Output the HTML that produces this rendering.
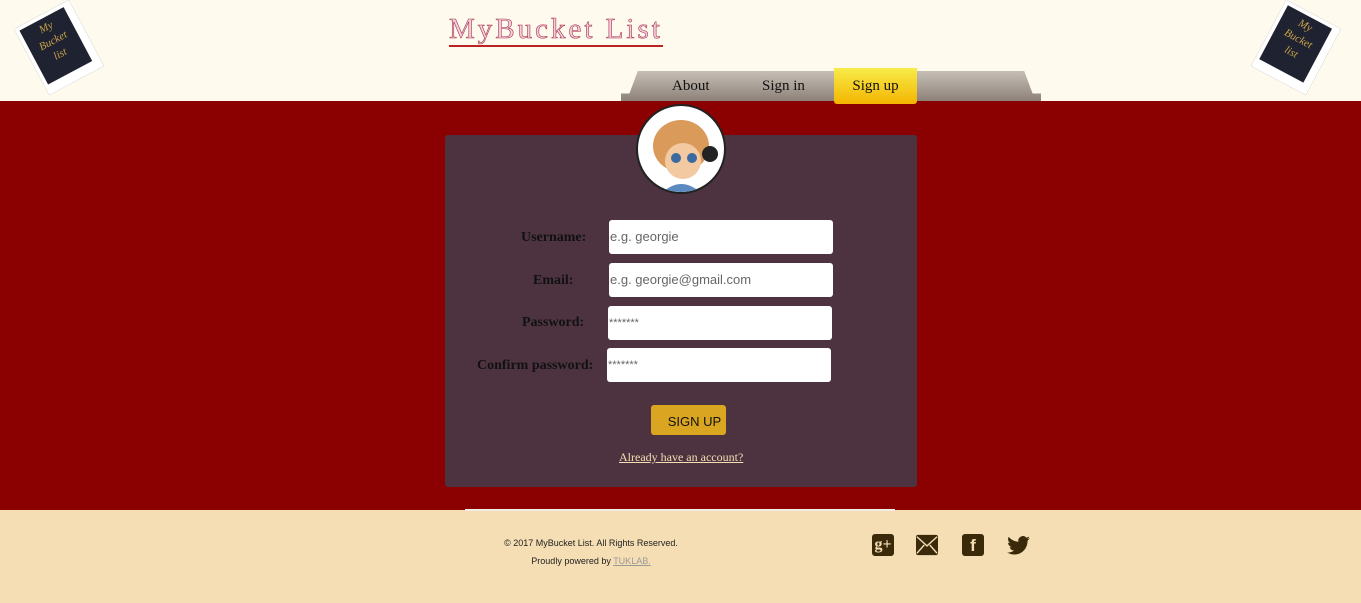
<!DOCTYPE html>
<html><head><style>
body{margin:0;width:1361px;height:603px;overflow:hidden;font-family:"Liberation Serif",serif;background:#f5deb3;position:relative}
.hdr{position:absolute;left:0;top:0;width:1361px;height:101px;background:#fffaee}
.red{position:absolute;left:0;top:101px;width:1361px;height:409px;background:#8b0000}
.logo{position:absolute;left:449px;top:14px;font-size:29px;letter-spacing:3px;border-bottom:2px solid #b22;line-height:31px;-webkit-text-stroke:.6px #a8324a;color:#f2d0e0;white-space:nowrap;width:214px;overflow:hidden}
.nav{position:absolute;left:621px;top:71px;width:420px;height:30px;background:linear-gradient(#c6beb5,#8d8279);clip-path:polygon(0 100%,0 75%,2% 75%,4% 0,96% 0,98% 75%,100% 75%,100% 100%)}
.nav span{position:absolute;top:6px;font-size:15px;color:#111}
.su{position:absolute;left:834px;top:68px;width:83px;height:36px;background:linear-gradient(#f8ec4a,#f3b500);border-radius:0 0 3px 3px;font-size:15px;text-align:center;line-height:36px;color:#111}
.book{position:absolute;width:50px;height:58px;background:#1f2230;border:solid #fff;border-width:4px 8px 10px 4px;font-style:italic;color:#c9a24a;font-size:11px;text-align:center;line-height:15px;padding-top:3px}
.panel{position:absolute;left:445px;top:135px;width:472px;height:352px;background:#4d3340;border-radius:3px}
.av{position:absolute;left:636px;top:104px;width:86px;height:86px;border-radius:50%;background:#fff;border:2px solid #222;overflow:hidden}
.lbl{position:absolute;font-weight:bold;font-size:14px;color:#111}
.in{position:absolute;width:224px;height:34px;background:#fff;border-radius:3px;font-family:"Liberation Sans",sans-serif;font-size:13px;color:#666;line-height:34px;box-sizing:border-box;padding-left:1px}
.btn{position:absolute;left:651px;top:405px;width:75px;height:30px;background:#daa520;border-radius:3px;font-family:"Liberation Sans",sans-serif;font-size:13px;line-height:33px;text-align:center;color:#111;padding-left:12px;box-sizing:border-box}
.lnk{position:absolute;left:619px;top:450px;font-size:12px;color:#f5deb3;text-decoration:underline}
.ft{position:absolute;font-family:"Liberation Sans",sans-serif;font-size:9px;color:#222;text-align:center;width:300px;left:441px}
.ic{position:absolute;top:534px;width:22px;height:22px;background:#3a2a0a;border-radius:3px}
</style></head><body>
<div class="hdr"></div>
<div class="red"></div>
<div class="book" style="left:28px;top:10px;transform:rotate(-28deg)">My<br>Bucket<br>list</div>
<div class="book" style="left:1265px;top:10px;transform:rotate(28deg)">My<br>Bucket<br>list</div>
<div class="logo">MyBucket List</div>
<div class="nav"><span style="left:51px;top:7px">About</span><span style="left:141px;top:7px">Sign in</span></div>
<div class="su">Sign up</div>
<div class="panel"></div>
<div class="av"><svg width="86" height="86"><ellipse cx="43" cy="40" rx="28" ry="26" fill="#d99a5a"/><ellipse cx="45" cy="55" rx="18" ry="18" fill="#f3c9a2"/><circle cx="38" cy="52" r="5" fill="#3a6aa0"/><circle cx="54" cy="52" r="5" fill="#3a6aa0"/><path d="M25 86 Q43 70 62 86Z" fill="#5a8ac0"/><circle cx="72" cy="48" r="8" fill="#222"/></svg></div>
<div class="lbl" style="left:521px;top:230px">Username:</div>
<div class="lbl" style="left:533px;top:273px">Email:</div>
<div class="lbl" style="left:522px;top:315px">Password:</div>
<div class="lbl" style="left:477px;top:358px">Confirm password:</div>
<div class="in" style="left:609px;top:220px">e.g. georgie</div>
<div class="in" style="left:609px;top:263px">e.g. georgie@gmail.com</div>
<div class="in" style="left:608px;top:306px;font-size:11px">*******</div>
<div class="in" style="left:607px;top:348px;font-size:11px">*******</div>
<div class="btn">SIGN UP</div>
<div class="lnk">Already have an account?</div>
<div style="position:absolute;left:465px;top:509px;width:430px;height:2px;background:#f2ece6"></div>
<div class="ft" style="top:538px">© 2017 MyBucket List. All Rights Reserved.</div>
<div class="ft" style="top:556px">Proudly powered by <u style="color:#999">TUKLAB.</u></div>
<div class="ic" style="left:872px;color:#f5deb3;font:bold 16px 'Liberation Serif';line-height:22px;text-align:center">g+</div>
<svg class="ic" style="left:916px;background:none" width="24" height="22" viewBox="0 0 24 22"><rect width="24" height="22" rx="2" fill="#3a2a0a"/><path d="M1 2 L12 12 L23 2 M1 20 L9 11 M23 20 L15 11" stroke="#f5deb3" stroke-width="1.5" fill="none"/></svg>
<div class="ic" style="left:962px;color:#f5deb3;font:bold 17px 'Liberation Sans';line-height:24px;text-align:center">f</div>
<svg style="position:absolute;left:1007px;top:536px" width="23" height="19" viewBox="0 0 24 20"><path d="M24 2.4c-.9.4-1.8.6-2.8.8 1-.6 1.800-1.6 2.2-2.7-1 .6-2 1-3.1 1.2A4.9 4.9 0 0 0 11.9 6 14 14 0 0 1 1.7.9a4.9 4.9 0 0 0 1.5 6.6c-.8 0-1.6-.3-2.2-.6 0 2.4 1.7 4.4 3.9 4.8-.7.2-1.5.2-2.200.1.6 2 2.4 3.4 4.6 3.4A9.9 9.9 0 0 1 0 17.3 14 14 0 0 0 7.5 19.5c9.1 0 14-7.5 14-14v-.6c1-.7 1.800-1.6 2.5-2.5z" fill="#3a2a0a"/></svg>
</body></html>
